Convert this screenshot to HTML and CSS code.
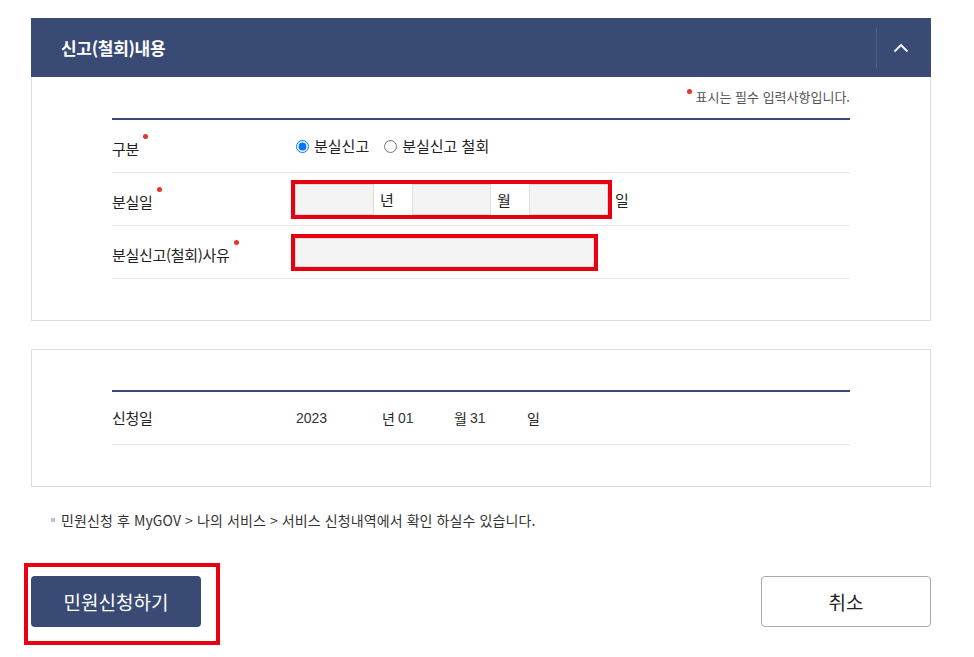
FILE: index.html
```html
<!DOCTYPE html>
<html lang="ko">
    <head>
        <title>분실신고</title>
        <meta charset="UTF-8">
        <meta name="viewport" content="width=device-width, initial-scale=1.0">
        <link rel="stylesheet" href="styles.css">
    </head>
    <body>
        <div class="page">

            <!-- 신고(철회) 내용 -->
            <section class="panel">
                <div class="panel-head">
                    <h2 class="panel-title">신고(철회)내용</h2>
                    <button type="button" class="toggle">
                        <svg width="16" height="10" viewBox="0 0 16 10"><polyline points="1.5,8.5 8,2 14.5,8.5" fill="none" stroke="#fff" stroke-width="1.8"/></svg>
                    </button>
                </div>
                <div class="panel-body">
                    <p class="req-note"><span class="dot"></span>표시는 필수 입력사항입니다.</p>
                    <div class="form-table">
                        <div class="form-row">
                            <div class="label">구분<span class="dot"></span></div>
                            <div class="value">
                                <label class="radio"><input type="radio" name="gubun" checked>분실신고</label>
                                <label class="radio"><input type="radio" name="gubun">분실신고 철회</label>
                            </div>
                        </div>
                        <div class="form-row">
                            <div class="label">분실일<span class="dot"></span></div>
                            <div class="value">
                                <div class="mark date-box">
                                    <input type="text" class="field date-field">
                                    <span class="date-unit">년</span>
                                    <input type="text" class="field date-field">
                                    <span class="date-unit">월</span>
                                    <input type="text" class="field date-field">
                                </div>
                                <span class="day-unit">일</span>
                            </div>
                        </div>
                        <div class="form-row">
                            <div class="label">분실신고(철회)사유<span class="dot"></span></div>
                            <div class="value">
                                <div class="mark">
                                    <input type="text" class="field reason-field">
                                </div>
                            </div>
                        </div>
                    </div>
                </div>
            </section>

            <!-- 신청일 -->
            <section class="panel panel-plain">
                <div class="form-table">
                    <div class="form-row">
                        <div class="label">신청일</div>
                        <div class="value apply-date">
                            <span class="num w86">2023</span><span class="unit">년</span><span class="num w56">01</span><span class="unit">월</span><span class="num w57">31</span><span class="unit">일</span>
                        </div>
                    </div>
                </div>
            </section>

            <p class="info">민원신청 후 MyGOV &gt; 나의 서비스 &gt; 서비스 신청내역에서 확인 하실수 있습니다.</p>

            <div class="btn-row">
                <div class="mark btn-mark">
                    <button type="button" class="btn btn-primary">민원신청하기</button>
                </div>
                <button type="button" class="btn btn-cancel">취소</button>
            </div>
        </div>
    </body>
</html>
```

FILE: styles.css
```css
body{
    margin: 0;
    font-family: "Noto Sans CJK KR", sans-serif;
    color: #222;
    background: #fff;
}
.page{
    width: 900px;
    margin: 18px 0 0 31px;
}

/* panel */
.panel-head{
    display: flex;
    align-items: center;
    height: 59px;
    padding-left: 30px;
    background: #394b75;
}
.panel-title{
    margin: 0;
    color: #fff;
    font-size: 17px;
    font-weight: 700;
    letter-spacing: -0.3px;
    line-height: 24px;
}
.toggle{
    margin-left: auto;
    width: 55px;
    height: 40px;
    padding: 0 6px 0 0;
    border: 0;
    border-left: 1px solid #4d5e87;
    background: none;
    display: flex;
    align-items: center;
    justify-content: center;
}
.panel-body{
    border: 1px solid #ddd;
    border-top: 0;
    padding: 0 80px 41px;
}
.panel-plain{
    margin-top: 28px;
    border: 1px solid #ddd;
    padding: 40px 80px 41px;
}

.req-note{
    margin: 0;
    padding: 10px 0 11px;
    line-height: 20px;
    text-align: right;
    font-size: 13px;
    color: #555;
}
.req-note .dot{
    margin: 0 4px 0 0;
    vertical-align: 8px;
}
.dot{
    display: inline-block;
    width: 5px;
    height: 5px;
    margin-left: 4px;
    border-radius: 50%;
    background: #e5332a;
    vertical-align: 16px;
}

/* form table */
.form-table{
    border-top: 2px solid #394b75;
}
.form-row{
    display: grid;
    grid-template-columns: 179px 1fr;
    align-items: center;
    height: 52px;
    border-bottom: 1px solid #e8e8e8;
}
.label{
    font-size: 15px;
    letter-spacing: -0.3px;
    line-height: 20px;
    color: #222;
}
.value{
    display: flex;
    align-items: center;
    font-size: 15px;
}
.radio{
    display: flex;
    align-items: center;
    margin-right: 10px;
    line-height: 20px;
    color: #222;
}
.radio input{
    width: 13px;
    height: 13px;
    margin: 0 5px 0 5px;
}

/* red highlight boxes */
.mark{
    border: 4px solid #e60012;
}
.date-box{
    display: flex;
}
.field{
    box-sizing: border-box;
    border: 1px solid #ddd;
    background: #f4f4f4;
    margin: 0;
    padding: 0 6px;
}
.date-field{
    width: 79px;
    height: 31px;
}
.date-unit{
    width: 38px;
    padding-left: 6px;
    box-sizing: border-box;
    line-height: 31px;
}
.day-unit{
    margin-left: 3px;
}
.reason-field{
    display: block;
    width: 299px;
    height: 29px;
}

/* 신청일 */
.apply-date{
    padding-left: 5px;
}
.num{
    font-family: "Liberation Sans", sans-serif;
    font-size: 14px;
    color: #333;
}
.unit{
    width: 16px;
    font-size: 14px;
}
.w86{ width: 86px; }
.w56{ width: 56px; }
.w57{ width: 57px; }

.info{
    margin: 24px 0 0;
    padding-left: 20px;
    font-size: 14px;
    letter-spacing: 0.1px;
    line-height: 18px;
    color: #333;
    display: flex;
    align-items: center;
}
.info::before{
    content: "";
    width: 4px;
    height: 4px;
    margin-right: 6px;
    background: #c4c4c4;
}

/* buttons */
.btn-row{
    display: flex;
    justify-content: space-between;
    align-items: flex-start;
    margin-top: 34px;
}
.btn-mark{
    margin-left: -7px;
    padding: 9px 15px 14px 3px;
}
.btn{
    display: block;
    width: 170px;
    height: 51px;
    border-radius: 4px;
    font-family: "Noto Sans CJK KR", sans-serif;
    font-size: 19px;
}
.btn-primary{
    border: 0;
    background: #394b75;
    color: #fff;
}
.btn-cancel{
    margin-top: 13px;
    border: 1px solid #aaa;
    background: #fff;
    color: #222;
}
```
